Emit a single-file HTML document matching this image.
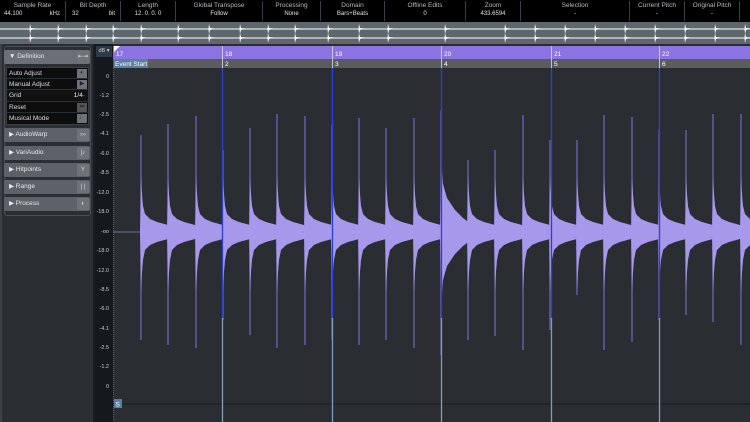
<!DOCTYPE html>
<html><head><meta charset="utf-8"><style>
*{margin:0;padding:0;box-sizing:border-box}
body{width:750px;height:422px;overflow:hidden;background:#2a2e33;font-family:"Liberation Sans",sans-serif;position:relative}
.hdr{position:absolute;left:0;top:0;width:750px;height:22px;background:#000;color:#c8c8c8;font-size:6.5px}
.col{position:absolute;top:1px;height:20px;border-right:1px solid #3a3f45;text-align:center}
.col .t{color:#b8bcc0;line-height:9px}
.col .v{color:#e0e0e0;font-size:6px;line-height:9px}
.lp{position:absolute;left:0;top:44px;width:95px;height:378px;background:#2b2f33;border-left:2px solid #3d4247;border-right:2px solid #1b1e21}
.btn{position:absolute;left:4px;width:86px;height:14px;background:#5d6268;border-radius:2px;color:#e8e8e8;font-size:6.5px;line-height:14px;padding-left:5px}
.btn i{position:absolute;right:1px;top:1px;width:12px;height:12px;background:#6d7379;border-radius:1px;font-style:normal;font-size:6px;line-height:12px;text-align:center;color:#ddd}
.rows{position:absolute;left:6px;top:67px;width:83px;height:58px;background:#111;border:1px solid #3a3f44}
.row{height:11.2px;border-bottom:1px solid #2a2e33;color:#dcdcdc;font-size:6.5px;line-height:11px;padding-left:2px;position:relative;background:#0c0d0e}
.row i{position:absolute;right:1px;top:1px;width:10px;height:9px;background:#6e7379;font-style:normal;font-size:6px;line-height:9px;text-align:center;color:#222}
.rul{position:absolute;left:95px;top:44px;width:18px;height:378px;background:#15181c}
.db{position:absolute;left:95px;width:17px;text-align:right;color:#c8ccd0;font-size:5.5px;padding-right:3px}
</style></head><body>
<div class="hdr">
<div class="col" style="left:0;width:66px"><div class="t">Sample Rate</div><div class="v" style="text-align:left;padding-left:4px">44.100 <span style="position:absolute;right:5px">kHz</span></div></div>
<div class="col" style="left:66px;width:55px"><div class="t">Bit Depth</div><div class="v" style="text-align:left;padding-left:6px">32 <span style="position:absolute;right:5px">bit</span></div></div>
<div class="col" style="left:121px;width:55px"><div class="t">Length</div><div class="v">12. 0. 0. 0</div></div>
<div class="col" style="left:176px;width:87px"><div class="t">Global Transpose</div><div class="v">Follow</div></div>
<div class="col" style="left:263px;width:58px"><div class="t">Processing</div><div class="v">None</div></div>
<div class="col" style="left:321px;width:64px"><div class="t">Domain</div><div class="v">Bars+Beats</div></div>
<div class="col" style="left:385px;width:81px"><div class="t">Offline Edits</div><div class="v">0</div></div>
<div class="col" style="left:466px;width:55px"><div class="t">Zoom</div><div class="v">433.6594</div></div>
<div class="col" style="left:521px;width:109px"><div class="t">Selection</div><div class="v">-</div></div>
<div class="col" style="left:630px;width:55px"><div class="t">Current Pitch</div><div class="v">-</div></div>
<div class="col" style="left:685px;width:55px"><div class="t">Original Pitch</div><div class="v">-</div></div>
</div>
<svg width="750" height="22" style="position:absolute;left:0;top:22px">
<defs><path id="sp" d="M0,-5 L1,-1 L6,-0.5 L1,1 L0,5 L-0.5,0Z" fill="#fff"/></defs>
<rect width="750" height="22" fill="#5e676d"/>
<line x1="0" y1="7" x2="750" y2="7" stroke="#fff" stroke-width="1"/>
<line x1="0" y1="16" x2="750" y2="16" stroke="#fff" stroke-width="1"/>
<g transform="translate(0,7)">
<use href="#sp" x="30"/><use href="#sp" x="58"/><use href="#sp" x="86"/><use href="#sp" x="113"/><use href="#sp" x="141"/><use href="#sp" x="178"/><use href="#sp" x="209"/><use href="#sp" x="240"/><use href="#sp" x="268"/><use href="#sp" x="295"/><use href="#sp" x="328"/><use href="#sp" x="359"/><use href="#sp" x="388"/><use href="#sp" x="445"/><use href="#sp" x="505"/><use href="#sp" x="535"/><use href="#sp" x="565"/><use href="#sp" x="595"/><use href="#sp" x="625"/><use href="#sp" x="655"/><use href="#sp" x="685"/><use href="#sp" x="715"/><use href="#sp" x="745"/>
</g>
<g transform="translate(0,16)">
<use href="#sp" x="30"/><use href="#sp" x="58"/><use href="#sp" x="86"/><use href="#sp" x="113"/><use href="#sp" x="141"/><use href="#sp" x="178"/><use href="#sp" x="209"/><use href="#sp" x="240"/><use href="#sp" x="268"/><use href="#sp" x="295"/><use href="#sp" x="328"/><use href="#sp" x="359"/><use href="#sp" x="388"/><use href="#sp" x="445"/><use href="#sp" x="505"/><use href="#sp" x="535"/><use href="#sp" x="565"/><use href="#sp" x="595"/><use href="#sp" x="625"/><use href="#sp" x="655"/><use href="#sp" x="685"/><use href="#sp" x="715"/><use href="#sp" x="745"/>
</g></svg>
<div class="lp">
<div style="position:absolute;left:2px;top:2px;width:87px;height:170px;border:1px solid #4a4f55;border-radius:3px"></div>
</div>
<div class="btn" style="top:50px;background:#6a7076">▼ Definition<i>⇤⇥</i></div>
<div class="rows">
<div class="row">Auto Adjust<i>◐</i></div>
<div class="row">Manual Adjust<i>▶</i></div>
<div class="row" style="background:#111">Grid<span style="position:absolute;right:3px;color:#eee">1/4·</span></div>
<div class="row">Reset<i style="background:#555">⇹</i></div>
<div class="row" style="border:0">Musical Mode<i>♩</i></div>
</div>
<div class="btn" style="top:128px">▶ AudioWarp<i>›››</i></div>
<div class="btn" style="top:146px">▶ VariAudio<i>|♪</i></div>
<div class="btn" style="top:163px">▶ Hitpoints<i>Y</i></div>
<div class="btn" style="top:180px">▶ Range<i>| |</i></div>
<div class="btn" style="top:197px">▶ Process<i>◐</i></div>
<div class="rul"></div>
<div style="position:absolute;left:96px;top:46px;width:16px;height:11px;background:#2d3a48;color:#ccc;font-size:5.5px;line-height:11px;text-align:center">dB ▾</div>
<div class="db" style="top:74px">0</div><div class="db" style="top:93px">-1.2</div><div class="db" style="top:112px">-2.5</div><div class="db" style="top:131px">-4.1</div><div class="db" style="top:151px">-6.0</div><div class="db" style="top:170px">-8.5</div><div class="db" style="top:190px">-12.0</div><div class="db" style="top:209px">-18.0</div><div class="db" style="top:229px">-oo</div><div class="db" style="top:248px">-18.0</div><div class="db" style="top:268px">-12.0</div><div class="db" style="top:287px">-8.5</div><div class="db" style="top:306px">-6.0</div><div class="db" style="top:326px">-4.1</div><div class="db" style="top:345px">-2.5</div><div class="db" style="top:364px">-1.2</div><div class="db" style="top:384px">0</div>
<svg width="637" height="378" viewBox="113 44 637 378" style="position:absolute;left:113px;top:44px">
<defs>
<polygon id="b" points="-1,0 0,-55 1,-38 2,-26 4,-18 9,-13 16,-10 27,-7 27,7 16,10 9,13 4,18 2,28 1,40 0,60" fill="#a898ec"/>
<polygon id="bb" points="-1,0 0,-75 2,-48 6,-34 14,-22 22,-14 30,-8 30,8 22,14 14,22 6,34 2,48 0,75" fill="#a898ec"/>
</defs>
<rect x="113" y="44" width="637" height="2" fill="#2a2e33"/>
<rect x="113" y="46" width="637" height="13" fill="#8b73e2"/>
<rect x="113" y="59" width="637" height="9" fill="#5b5c5e"/>
<rect x="113" y="68" width="637" height="354" fill="#2a2e33"/>
<polygon points="114,46 120,46 114,52" fill="#fff"/>
<rect x="114" y="59" width="34" height="9" fill="#5b7f9c"/>
<g font-size="6.5" fill="#fff" font-family="Liberation Sans">
<text x="116" y="56">17</text><text x="225" y="56">18</text><text x="335" y="56">19</text><text x="444" y="56">20</text><text x="554" y="56">21</text><text x="662" y="56">22</text>
<text x="115" y="66">Event Start</text><text x="225" y="66">2</text><text x="335" y="66">3</text><text x="444" y="66">4</text><text x="554" y="66">5</text><text x="662" y="66">6</text>
</g>
<line x1="113.5" y1="68" x2="113.5" y2="422" stroke="#3d5f8a" stroke-dasharray="1,1"/>
<line x1="113" y1="404" x2="750" y2="404" stroke="#15181c" stroke-width="1"/>
<rect x="114" y="399" width="8" height="9" fill="#5a7f9e"/><text x="115.5" y="406.5" font-size="6.5" fill="#fff" font-family="Liberation Sans">S</text>
<line x1="113" y1="232" x2="141" y2="232" stroke="#8a86b0" stroke-width="0.7"/>
<g stroke="#6d62b4" stroke-width="1.3">
<line x1="141" y1="135" x2="141" y2="340"/><line x1="168" y1="124" x2="168" y2="345"/><line x1="196" y1="116" x2="196" y2="348"/><line x1="223" y1="150" x2="223" y2="320"/><line x1="250" y1="128" x2="250" y2="335"/><line x1="277" y1="114" x2="277" y2="348"/><line x1="305" y1="116" x2="305" y2="345"/><line x1="332" y1="125" x2="332" y2="340"/><line x1="359" y1="118" x2="359" y2="345"/><line x1="386" y1="128" x2="386" y2="340"/><line x1="414" y1="118" x2="414" y2="348"/><line x1="441" y1="110" x2="441" y2="355"/><line x1="468" y1="160" x2="468" y2="340"/><line x1="495" y1="150" x2="495" y2="336"/><line x1="523" y1="115" x2="523" y2="350"/><line x1="550" y1="140" x2="550" y2="330"/><line x1="577" y1="140" x2="577" y2="295"/><line x1="604" y1="115" x2="604" y2="350"/><line x1="632" y1="117" x2="632" y2="342"/><line x1="659" y1="130" x2="659" y2="320"/><line x1="686" y1="130" x2="686" y2="315"/><line x1="713" y1="114" x2="713" y2="322"/><line x1="741" y1="114" x2="741" y2="345"/>
</g>
<g transform="translate(0,232)">
<rect x="141" y="-6" width="609" height="12" fill="#a898ec"/>
<use href="#b" x="141"/><use href="#b" x="168"/><use href="#b" x="196"/><use href="#b" x="223"/><use href="#b" x="250"/><use href="#b" x="277"/><use href="#b" x="305"/><use href="#b" x="332"/><use href="#b" x="359"/><use href="#b" x="386"/><use href="#b" x="414"/><use href="#bb" x="441"/><use href="#b" x="468"/><use href="#b" x="495"/><use href="#b" x="523"/><use href="#b" x="550"/><use href="#b" x="577"/><use href="#b" x="604"/><use href="#b" x="632"/><use href="#b" x="659"/><use href="#b" x="686"/><use href="#b" x="713"/><use href="#b" x="741"/>
</g>
<g stroke-width="1.3">
<line x1="222.5" y1="68" x2="222.5" y2="318" stroke="#2c3fe0"/><line x1="222.5" y1="318" x2="222.5" y2="422" stroke="#7f9fb8"/>
<line x1="332.5" y1="68" x2="332.5" y2="318" stroke="#2c3fe0"/><line x1="332.5" y1="318" x2="332.5" y2="422" stroke="#7f9fb8"/>
<line x1="441.5" y1="68" x2="441.5" y2="318" stroke="#2c3fe0"/><line x1="441.5" y1="318" x2="441.5" y2="422" stroke="#7f9fb8"/>
<line x1="551.5" y1="68" x2="551.5" y2="318" stroke="#2c3fe0"/><line x1="551.5" y1="318" x2="551.5" y2="422" stroke="#7f9fb8"/>
<line x1="659.5" y1="68" x2="659.5" y2="318" stroke="#2c3fe0"/><line x1="659.5" y1="318" x2="659.5" y2="422" stroke="#7f9fb8"/>
</g>
<g stroke="#ddd" stroke-width="0.8">
<line x1="222.5" y1="46" x2="222.5" y2="68"/><line x1="332.5" y1="46" x2="332.5" y2="68"/><line x1="441.5" y1="46" x2="441.5" y2="68"/><line x1="551.5" y1="46" x2="551.5" y2="68"/><line x1="659.5" y1="46" x2="659.5" y2="68"/>
</g>
</svg>
</body></html>
